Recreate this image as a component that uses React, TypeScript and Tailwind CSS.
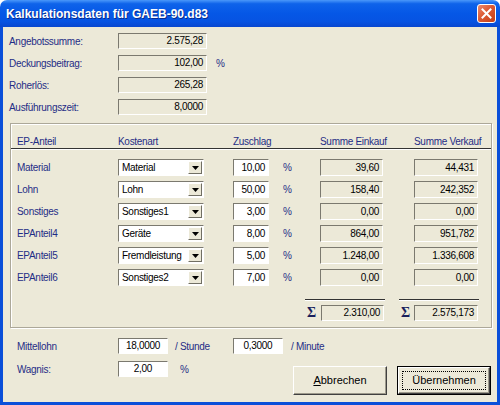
import React from "react";

const LBL = "text-[#1f2d86]";

function Box({
  w,
  h = 16,
  white = false,
  align = "right",
  children,
}: {
  w: number;
  h?: number;
  white?: boolean;
  align?: "right" | "center" | "left";
  children?: React.ReactNode;
}) {
  const al =
    align === "right"
      ? "justify-end pr-[3px]"
      : align === "center"
      ? "justify-center"
      : "justify-start pl-[3px]";
  return (
    <div
      style={{ width: w, height: h }}
      className={`box-border flex items-center border border-t-[#7b796f] border-l-[#7b796f] border-b-white border-r-white text-black ${al} ${
        white ? "bg-white" : "bg-[#ECE9D8]"
      }`}
    >
      <span className="leading-none whitespace-nowrap">{children}</span>
    </div>
  );
}

function Combo({ value }: { value: string }) {
  return (
    <div className="box-border w-[86px] h-[17px] flex items-stretch border border-t-[#7b796f] border-l-[#7b796f] border-b-white border-r-white bg-white">
      <div className="flex-1 flex items-center pl-[3px] text-black leading-none whitespace-nowrap overflow-hidden">
        {value}
      </div>
      <div className="box-border w-[14px] my-[1px] mr-[1px] flex items-center justify-center bg-[#ECE9D8] border border-t-white border-l-white border-b-[#716f64] border-r-[#716f64]">
        <svg width="7" height="4" viewBox="0 0 7 4">
          <path d="M0 0H7L3.5 4Z" fill="#000" />
        </svg>
      </div>
    </div>
  );
}

function Btn({ children, def = false }: { children: React.ReactNode; def?: boolean }) {
  return (
    <div
      className={`box-border w-[94px] h-[29px] ${
        def ? "border border-black" : ""
      } bg-[#ECE9D8]`}
    >
      <div className="box-border w-full h-full border border-t-white border-l-white border-b-[#404040] border-r-[#404040] shadow-[inset_-1px_-1px_0_#9d9a8c] flex items-center justify-center p-[3px]">
        <div
          className={`w-full h-full flex items-center justify-center text-black text-[11px] tracking-normal ${
            def ? "border border-dotted border-black" : ""
          }`}
        >
          {children}
        </div>
      </div>
    </div>
  );
}

const rows = [
  { ep: "Material", k: "Material", z: "10,00", e: "39,60", v: "44,431" },
  { ep: "Lohn", k: "Lohn", z: "50,00", e: "158,40", v: "242,352" },
  { ep: "Sonstiges", k: "Sonstiges1", z: "3,00", e: "0,00", v: "0,00" },
  { ep: "EPAnteil4", k: "Geräte", z: "8,00", e: "864,00", v: "951,782" },
  { ep: "EPAnteil5", k: "Fremdleistung", z: "5,00", e: "1.248,00", v: "1.336,608" },
  { ep: "EPAnteil6", k: "Sonstiges2", z: "7,00", e: "0,00", v: "0,00" },
];

export default function App() {
  return (
    <div className="w-[500px] h-[405px] flex flex-col bg-white overflow-hidden font-['Liberation_Sans',Arial,sans-serif] text-[10px]">
      {/* Title bar */}
      <div className="h-[27px] shrink-0 rounded-t-[7px] flex items-center pl-[6px] pr-[4px] bg-[linear-gradient(to_bottom,#4a98fa_0%,#0e63ea_14%,#0557e6_50%,#0653e2_80%,#0846cf_100%)]">
        <span className="text-white font-bold text-[12px] leading-none [text-shadow:1px_1px_0_#0a2c8c]">
          Kalkulationsdaten für GAEB-90.d83
        </span>
        <div className="ml-auto box-border w-[19px] h-[19px] rounded-[3px] border border-white bg-[linear-gradient(135deg,#ec8a6e_0%,#dc5a34_45%,#c43e16_100%)] flex items-center justify-center">
          <svg width="11" height="11" viewBox="0 0 11 11">
            <path d="M1.5 1.5L9.5 9.5M9.5 1.5L1.5 9.5" stroke="#fff" strokeWidth="2" strokeLinecap="square" />
          </svg>
        </div>
      </div>

      {/* Frame */}
      <div className="flex-1 flex flex-col bg-[#0a4fd9] px-[3px] pb-[3px]">
        <div className="flex-1 flex flex-col bg-[#ECE9D8] tracking-[-0.3px]">
          {/* Top fields */}
          <div className="pt-[6px] pl-[6px] grid grid-cols-[109px_89px_auto] gap-y-[6px] items-center">
            <span className={LBL}>Angebotssumme:</span>
            <Box w={89}>2.575,28</Box>
            <span />
            <span className={LBL}>Deckungsbeitrag:</span>
            <Box w={89}>102,00</Box>
            <span className={`${LBL} pl-[9px]`}>%</span>
            <span className={LBL}>Roherlös:</span>
            <Box w={89}>265,28</Box>
            <span />
            <span className={LBL}>Ausführungszeit:</span>
            <Box w={89}>8,0000</Box>
            <span />
          </div>

          {/* Group box */}
          <div className="mt-[8px] ml-[7px] mr-[5px] box-border border border-[#aca899] shadow-[inset_1px_1px_0_#fff,1px_1px_0_#fff] flex flex-col">
            <div className="pt-[10px] pl-[6px] h-[24px] box-border grid grid-cols-[101px_115px_87px_94px_64px] items-center">
              <span className={LBL}>EP-Anteil</span>
              <span className={LBL}>Kostenart</span>
              <span className={LBL}>Zuschlag</span>
              <span className={`${LBL} w-[63px] text-center whitespace-nowrap`}>Summe Einkauf</span>
              <span className={`${LBL} text-center whitespace-nowrap`}>Summe Verkauf</span>
            </div>
            <div className="h-[2px] box-border border-t border-t-[#333] border-b border-b-white" />
            <div className="pt-[9px] pl-[6px] grid grid-cols-[101px_115px_87px_94px_64px] gap-y-[5px] items-center">
              {rows.map((r) => (
                <React.Fragment key={r.ep}>
                  <span className={LBL}>{r.ep}</span>
                  <Combo value={r.k} />
                  <div className="flex items-center">
                    <Box w={36} h={17} white>
                      {r.z}
                    </Box>
                    <span className={`${LBL} ml-[14px]`}>%</span>
                  </div>
                  <Box w={63} h={17}>
                    {r.e}
                  </Box>
                  <Box w={64} h={17}>
                    {r.v}
                  </Box>
                </React.Fragment>
              ))}
            </div>
            <div className="mt-[13px] pl-[294px] pb-[6px] flex gap-[14px]">
              {[
                { val: "2.310,00", w: 63 },
                { val: "2.575,173", w: 64 },
              ].map((s) => (
                <div key={s.val} className="w-[80px] flex flex-col">
                  <div className="h-[2px] box-border border-t border-t-[#333] border-b border-b-white" />
                  <div className="mt-[4px] flex items-center">
                    <span className="ml-[2px] font-['Liberation_Serif',serif] font-bold text-[14px] leading-none text-[#1a1f5c]">
                      Σ
                    </span>
                    <div className="ml-auto mr-[1px]">
                      <Box w={s.w}>{s.val}</Box>
                    </div>
                  </div>
                </div>
              ))}
            </div>
          </div>

          {/* Bottom section */}
          <div className="mt-[10px] pl-[14px] pr-[6px] flex flex-col">
            <div className="flex items-center">
              <span className={`${LBL} w-[101px]`}>Mittellohn</span>
              <Box w={50} white align="center">
                18,0000
              </Box>
              <span className={`${LBL} w-[65px] pl-[7px]`}>/ Stunde</span>
              <Box w={50} white align="center">
                0,3000
              </Box>
              <span className={`${LBL} pl-[8px]`}>/ Minute</span>
            </div>
            <div className="mt-[7px] flex items-start">
              <div className="flex items-center">
                <span className={`${LBL} w-[101px]`}>Wagnis:</span>
                <Box w={50} white align="center">
                  2,00
                </Box>
                <span className={`${LBL} pl-[12px]`}>%</span>
              </div>
              <div className="ml-auto mt-[5px] flex gap-[10px]">
                <Btn>
                  <span>
                    <span className="underline">A</span>bbrechen
                  </span>
                </Btn>
                <Btn def>Übernehmen</Btn>
              </div>
            </div>
          </div>
        </div>
      </div>
    </div>
  );
}
